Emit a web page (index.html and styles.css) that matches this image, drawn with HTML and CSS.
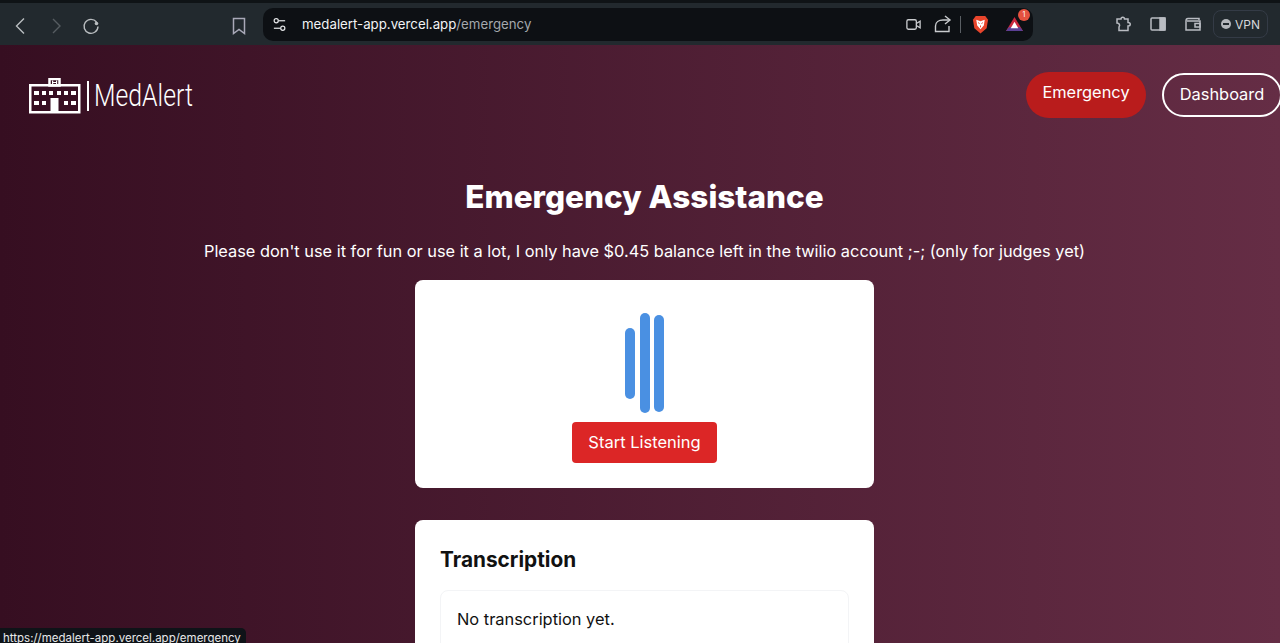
FILE: index.html
```html
<!DOCTYPE html>
<html lang="en">
<head>
    <meta charset="UTF-8">
    <meta name="viewport" content="width=device-width, initial-scale=1.0">
    <title>MedAlert - Emergency</title>
    <link rel="stylesheet" href="styles.css">
</head>
<body>
    <!-- browser chrome -->
    <div class="toolbar">
        <div class="nav-icons">
            <svg class="tool-icon" viewBox="0 0 18 18"><path d="M12 1.500 L4.500 9 L12 16.500"/></svg>
            <svg class="tool-icon dim" viewBox="0 0 18 18"><path d="M6 2 L13 9 L6 16"/></svg>
            <svg class="tool-icon" viewBox="0 0 18 18"><path d="M14.500 5 A7 7 0 1 0 16 9.500"/><circle class="reload-dot" cx="14.500" cy="6.500" r="1.800"/></svg>
        </div>
        <svg class="bookmark" viewBox="0 0 14 18"><path d="M1.500 1.500 H12.500 V16.500 L7 12.500 L1.500 16.500 Z"/></svg>
        <div class="address-bar">
            <svg class="tune" viewBox="0 0 16 16"><circle cx="4.500" cy="4" r="2.200"/><path d="M7 4 H14"/><circle cx="11.500" cy="12" r="2.200"/><path d="M2 12 H9"/></svg>
            <span class="url">medalert-app.vercel.app<span class="url-path">/emergency</span></span>
            <div class="address-actions">
                <svg class="addr-icon" viewBox="0 0 18 18"><rect x="2" y="4" width="10" height="10" rx="1.500"/><path d="M12 8 L16 5.500 V12.500 L12 10"/></svg>
                <svg class="addr-icon share" viewBox="0 0 18 18"><path d="M15 11 V16.500 H1.500 V11 C1.500 7 5 5 9 5 H15"/><path d="M11 1 L16 5 L11 9"/></svg>
                <span class="addr-sep"></span>
                <svg class="brave" viewBox="0 0 18 20"><path d="M4 1 H14 L17 5 L15.500 14 L9 19.500 L2.500 14 L1 5 Z" fill="#e8452c"/><path d="M4.500 5 L9 6.500 L13.500 5 L12.500 11 L9 15 L5.500 11 Z" fill="#fff"/><path d="M6.500 8 L8 9 M11.500 8 L10 9 M9 11 V13" stroke="#e8452c" fill="none"/></svg>
                <div class="rewards">
                    <svg viewBox="0 0 20 18"><path d="M10 1 L19 16 H1 Z" fill="#c9283e"/><path d="M1 16 L4 12 H16 L19 16 Z" fill="#5a3f94"/><path d="M10 6 L14 13 H6 Z" fill="#fff"/></svg>
                    <span class="badge">1</span>
                </div>
            </div>
        </div>
        <div class="toolbar-right">
            <svg class="side-icon" viewBox="0 0 18 18"><path d="M3 4 H7 C7 1.500 10.500 1.500 10.500 4 H14 V7.500 C17 7.500 17 11 14 11 V15.500 H5 V12 C6.500 10 5 8 3 8 Z"/></svg>
            <svg class="side-icon" viewBox="0 0 18 18"><rect x="2" y="3" width="14" height="12" rx="1"/><rect x="11" y="3" width="5" height="12" class="panel-fill"/></svg>
            <svg class="side-icon" viewBox="0 0 18 18"><path d="M15 5 V3.500 H4 C2.500 3.500 2 4.500 2 6 V15 H16 V6 H3"/><rect x="11" y="8.500" width="5" height="3.500"/></svg>
            <div class="vpn"><span class="vpn-dot"></span>VPN</div>
        </div>
    </div>

    <!-- page -->
    <div class="page">
        <header class="site-header">
            <div class="logo">
                <svg class="logo-mark" viewBox="0 0 52 36">
                    <rect class="logo-line" x="1.250" y="7.250" width="49" height="27"/>
                    <rect class="logo-line" x="20.500" y="1" width="10" height="6.500"/>
                    <rect class="logo-fill" x="23" y="2.500" width="1.200" height="4"/>
                    <rect class="logo-fill" x="27" y="2.500" width="1.200" height="4"/>
                    <rect class="logo-fill" x="23" y="4" width="5" height="1"/>
                    <rect class="logo-fill" x="5" y="13" width="5" height="4"/>
                    <rect class="logo-fill" x="13" y="13" width="4" height="4"/>
                    <rect class="logo-fill" x="20" y="13" width="4" height="4"/>
                    <rect class="logo-fill" x="28" y="13" width="4" height="4"/>
                    <rect class="logo-fill" x="35" y="13" width="4" height="4"/>
                    <rect class="logo-fill" x="42" y="13" width="5" height="4"/>
                    <rect class="logo-fill" x="5" y="23" width="5" height="4"/>
                    <rect class="logo-fill" x="13" y="23" width="4" height="4"/>
                    <rect class="logo-fill" x="35" y="23" width="4" height="4"/>
                    <rect class="logo-fill" x="42" y="23" width="5" height="4"/>
                    <rect class="logo-fill" x="21.500" y="20" width="8" height="14"/>
                </svg>
                <span class="logo-divider"></span>
                <span class="logo-text">MedAlert</span>
            </div>
            <nav class="site-nav">
                <a href="#" class="btn-emergency">Emergency</a>
                <a href="#" class="btn-dashboard">Dashboard</a>
            </nav>
        </header>

        <main class="content">
            <h1>Emergency Assistance</h1>
            <p class="notice">Please don't use it for fun or use it a lot, I only have $0.45 balance left in the twilio account ;-; (only for judges yet)</p>

            <section class="card listen-card">
                <div class="wave">
                    <span class="wave-bar bar-short"></span>
                    <span class="wave-bar bar-tall"></span>
                    <span class="wave-bar bar-mid"></span>
                </div>
                <button class="listen-btn">Start Listening</button>
            </section>

            <section class="card transcript-card">
                <h2>Transcription</h2>
                <div class="transcript-box">No transcription yet.</div>
            </section>
        </main>
    </div>

    <div class="status-link">https://medalert-app.vercel.app/emergency</div>
</body>
</html>
```

FILE: styles.css
```css
* {
    box-sizing: border-box;
}

html, body {
    height: 100%;
}

body {
    margin: 0;
    overflow: hidden;
    font-family: 'Inter', 'Liberation Sans', sans-serif;
    background: #3a1024;
}

/* browser toolbar */
.toolbar {
    height: 45px;
    display: flex;
    align-items: center;
    padding-top: 3px;
    background: #22292e;
    border-top: 3px solid #0f1316;
    color: #fff;
}

.nav-icons {
    display: flex;
    align-items: center;
    gap: 17px;
    margin-left: 12px;
}

.tool-icon {
    width: 18px;
    height: 18px;
    fill: none;
    stroke: #b9bdc0;
    stroke-width: 1.4;
}

.tool-icon.dim {
    stroke: #565c61;
}

.reload-dot {
    fill: #b9bdc0;
    stroke: none;
}

.bookmark {
    width: 14px;
    height: 18px;
    margin-left: 132px;
    fill: none;
    stroke: #a9a9b8;
    stroke-width: 1.5;
}

.address-bar {
    width: 770px;
    height: 33px;
    margin-left: 17px;
    margin-top: -3px;
    display: flex;
    align-items: center;
    padding: 0 8px 0 9px;
    background: #0d1014;
    border-radius: 10px;
}

.tune {
    width: 15px;
    height: 15px;
    fill: none;
    stroke: #e4e6e8;
    stroke-width: 1.3;
}

.url {
    margin-left: 15px;
    font-size: 13.250px;
    color: #f2f3f4;
}

.url-path {
    color: #a4a8ad;
}

.address-actions {
    margin-left: auto;
    display: flex;
    align-items: center;
}

.addr-icon {
    width: 17px;
    height: 17px;
    fill: none;
    stroke: #c9cbce;
    stroke-width: 1.4;
}

.share {
    width: 18px;
    height: 18px;
    margin-left: 12px;
}

.addr-sep {
    width: 1px;
    height: 17px;
    margin-left: 8px;
    background: #5a5f64;
}

.brave {
    width: 17px;
    height: 19px;
    margin-left: 11px;
}

.rewards {
    position: relative;
    width: 19px;
    height: 17px;
    margin-left: 16px;
    margin-right: 1px;
}

.rewards svg {
    display: block;
    width: 19px;
    height: 17px;
}

.badge {
    position: absolute;
    top: -7px;
    right: -6px;
    width: 12px;
    height: 12px;
    border-radius: 50%;
    background: #e5523f;
    color: #fff;
    font-size: 7px;
    line-height: 12px;
    text-align: center;
}

.toolbar-right {
    display: flex;
    align-items: center;
    gap: 17px;
    margin-left: 81px;
    margin-top: -3px;
}

.side-icon {
    width: 18px;
    height: 18px;
    fill: none;
    stroke: #b9bcc2;
    stroke-width: 1.5;
}

.panel-fill {
    fill: #b9bcc2;
}

.vpn {
    width: 55px;
    height: 28px;
    margin-left: -6px;
    display: flex;
    align-items: center;
    justify-content: center;
    gap: 4px;
    border: 1px solid #343b46;
    border-radius: 8px;
    color: #d5d7da;
    font-size: 12px;
}

.vpn-dot {
    position: relative;
    width: 10px;
    height: 10px;
    border-radius: 50%;
    background: #b4b7bb;
}

.vpn-dot::after {
    content: "";
    position: absolute;
    left: 2px;
    top: 4px;
    width: 6px;
    height: 2px;
    background: #22292e;
}

/* page */
.page {
    height: 598px;
    overflow: hidden;
    background: linear-gradient(to right, #360e21, #652d45);
    color: #fff;
}

.site-header {
    display: flex;
    align-items: center;
    justify-content: space-between;
    padding: 27px 0 0 29px;
    margin-right: -2px;
}

.logo {
    display: flex;
    align-items: center;
    margin-top: 1px;
}

.logo-mark {
    display: block;
    width: 52px;
    height: 36px;
}

.logo-line {
    fill: none;
    stroke: #fff;
    stroke-width: 2.500;
}

.logo-fill {
    fill: #fff;
}

.logo-divider {
    width: 2px;
    height: 30px;
    margin-left: 6px;
    background: #fff;
}

.logo-text {
    display: inline-block;
    width: 100px;
    margin-left: 5px;
    font-family: 'Roboto', sans-serif;
    font-weight: 300;
    font-size: 31px;
    line-height: 36px;
    white-space: nowrap;
    transform: scaleX(0.8);
    transform-origin: left center;
}

.site-nav {
    display: flex;
    align-items: center;
    gap: 16px;
}

.btn-emergency,
.btn-dashboard {
    color: #fff;
    text-decoration: none;
    font-size: 16.400px;
    border-radius: 23px;
}

.btn-emergency {
    width: 120px;
    height: 46px;
    padding-top: 10px;
    text-align: center;
    background: #b91c1c;
}

.btn-dashboard {
    width: 120px;
    height: 44px;
    line-height: 38px;
    text-align: center;
    border: 2px solid #fff;
}

.content {
    display: flex;
    flex-direction: column;
    align-items: center;
    padding-left: 9px;
}

h1 {
    margin: 57px 0 0;
    font-size: 31.500px;
    line-height: 44px;
    font-weight: 800;
}

.notice {
    margin: 20px 0 0;
    font-size: 16.350px;
    line-height: 24px;
}

.card {
    width: 459px;
    background: #fff;
    border-radius: 8px;
    color: #111;
}

.listen-card {
    margin-top: 17px;
    height: 208px;
    display: flex;
    flex-direction: column;
    align-items: center;
    padding-top: 33px;
}

.wave {
    height: 100px;
    display: flex;
    align-items: center;
    gap: 4.500px;
}

.wave-bar {
    width: 10px;
    border-radius: 5px;
    background: #4a90e2;
}

.bar-short {
    height: 71px;
}

.bar-tall {
    height: 100px;
}

.bar-mid {
    height: 97px;
}

.listen-btn {
    width: 145px;
    height: 41px;
    margin-top: 9px;
    padding-bottom: 3px;
    border: none;
    border-radius: 4px;
    background: #dc2626;
    color: #fff;
    font-family: inherit;
    font-size: 16.500px;
}

.transcript-card {
    margin-top: 32px;
    padding: 25px 25px;
}

h2 {
    margin: 0;
    font-size: 20.800px;
    line-height: 30px;
    font-weight: 700;
}

.transcript-box {
    margin-top: 15px;
    height: 120px;
    padding: 16px;
    border: 1px solid #f3f4f6;
    border-radius: 8px;
    font-size: 16.400px;
    line-height: 24px;
}

.status-link {
    position: fixed;
    left: 0;
    bottom: 0;
    width: 246px;
    height: 15px;
    overflow: hidden;
    padding-left: 3px;
    background: #0f1318;
    border-top-right-radius: 5px;
    color: #e8e9ea;
    font-size: 11.500px;
    line-height: 20px;
    white-space: nowrap;
}
```
